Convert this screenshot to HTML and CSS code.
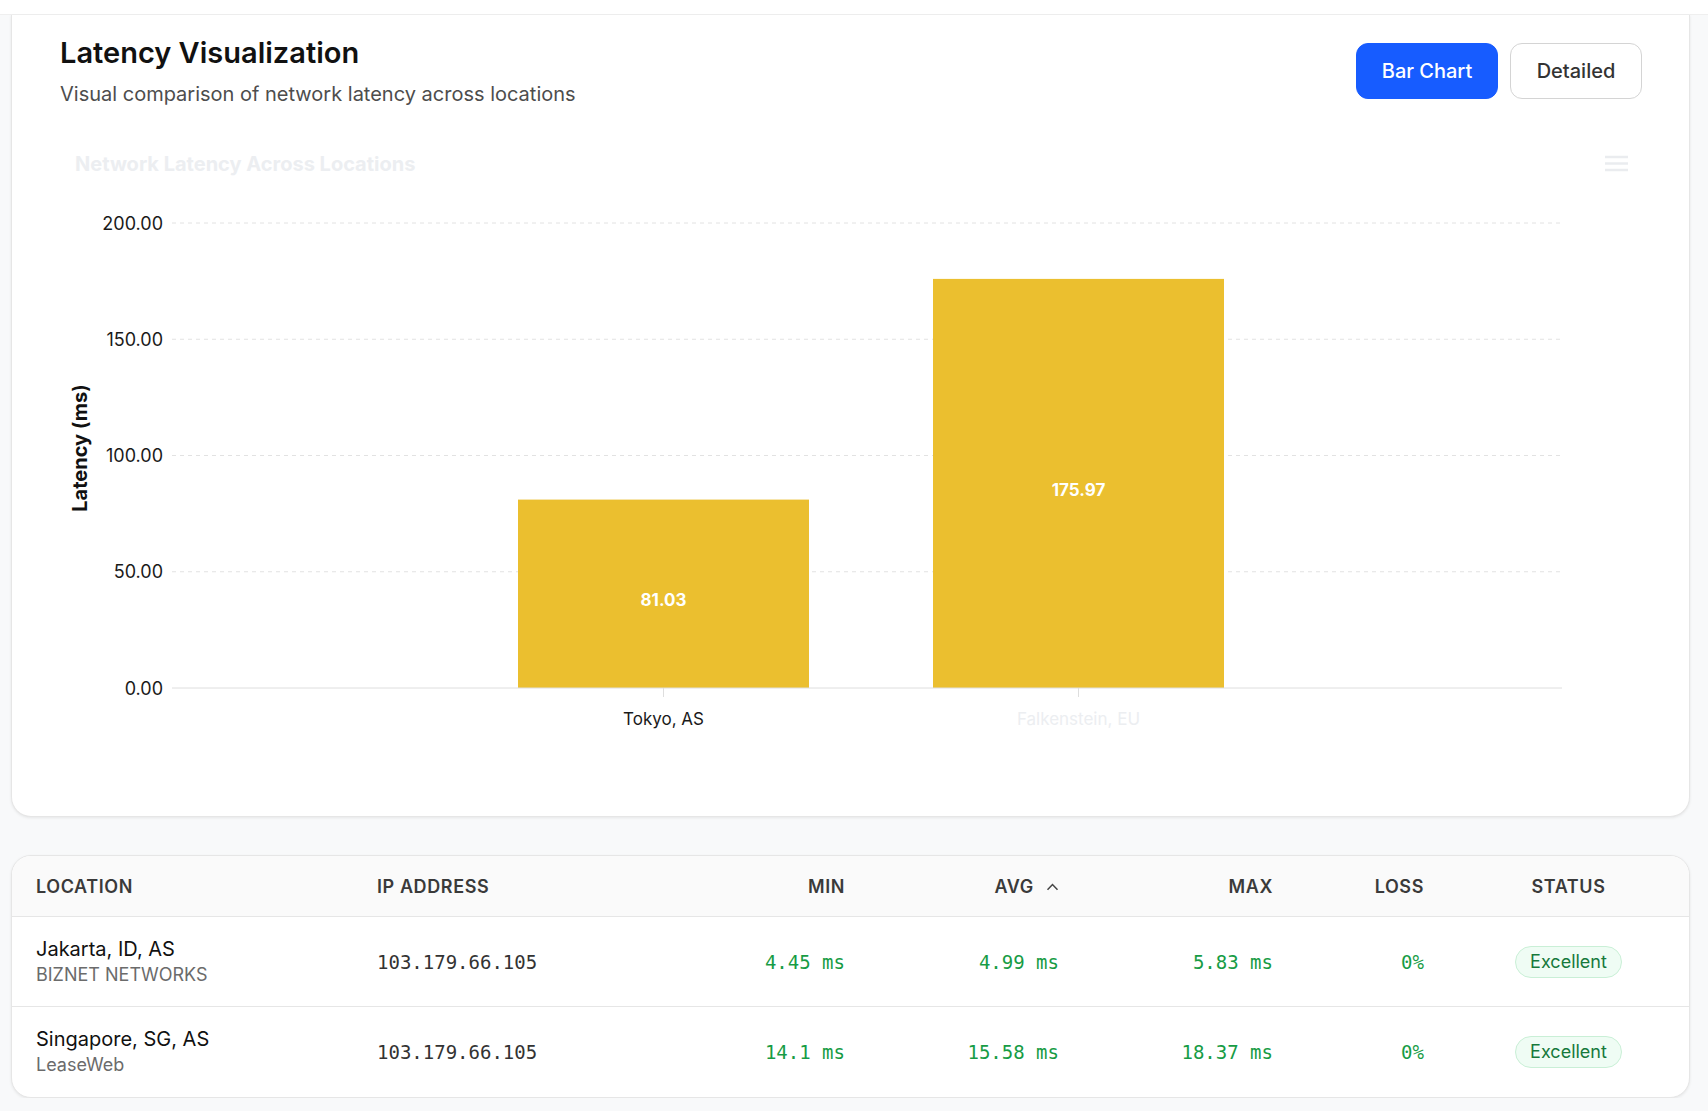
FILE: index.html
```html
<!DOCTYPE html>
<html lang="en">
<head>
    <meta charset="UTF-8">
    <title>Latency Visualization</title>
    <link rel="stylesheet" href="styles.css">
</head>

<body>

<div class="topbar"></div>

<div class="page">

    <!-- Chart card -->
    <div class="card chart-card">
        <div class="card-head">
            <div>
                <h2 class="title">Latency Visualization</h2>
                <p class="subtitle">Visual comparison of network latency across locations</p>
            </div>
            <div class="toggle">
                <button class="btn btn-active">Bar Chart</button>
                <button class="btn">Detailed</button>
            </div>
        </div>

        <svg class="chart" width="1677" height="690" viewBox="12 120 1677 690">
            <text class="chart-title" x="75" y="171">Network Latency Across Locations</text>

            <!-- menu -->
            <g class="menu">
                <line x1="1605" y1="157" x2="1628" y2="157"/>
                <line x1="1605" y1="163.5" x2="1628" y2="163.5"/>
                <line x1="1605" y1="170" x2="1628" y2="170"/>
            </g>

            <!-- grid -->
            <g class="grid">
                <line x1="172" y1="223" x2="1562" y2="223"/>
                <line x1="172" y1="339.25" x2="1562" y2="339.25"/>
                <line x1="172" y1="455.5" x2="1562" y2="455.5"/>
                <line x1="172" y1="571.75" x2="1562" y2="571.75"/>
            </g>

            <g class="y-labels">
                <text x="163" y="229.5">200.00</text>
                <text x="163" y="345.5">150.00</text>
                <text x="163" y="462">100.00</text>
                <text x="163" y="578">50.00</text>
                <text x="163" y="694.5">0.00</text>
            </g>

            <text class="y-title" x="87" y="448" transform="rotate(-90 87 448)">Latency (ms)</text>

            <!-- bars -->
            <rect class="bar" x="518" y="499.6" width="291" height="188.4"/>
            <rect class="bar" x="933" y="278.9" width="291" height="409.1"/>

            <text class="bar-label" x="663.5" y="605.5">81.03</text>
            <text class="bar-label" x="1078.5" y="495.5">175.97</text>

            <!-- x axis -->
            <line class="axis" x1="172" y1="688" x2="1562" y2="688"/>
            <line class="axis" x1="663.5" y1="688" x2="663.5" y2="697"/>
            <line class="axis" x1="1078.5" y1="688" x2="1078.5" y2="697"/>

            <text class="x-label" x="663.5" y="724.5">Tokyo, AS</text>
            <text class="x-label x-faded" x="1078.5" y="724.5">Falkenstein, EU</text>
        </svg>
    </div>

    <!-- Results table -->
    <div class="card table-card">
        <table class="results">
            <colgroup>
                <col style="width:341px">
                <col style="width:247px">
                <col style="width:269px">
                <col style="width:214px">
                <col style="width:214px">
                <col style="width:151px">
                <col style="width:241px">
            </colgroup>
            <thead>
                <tr>
                    <th>Location</th>
                    <th>IP Address</th>
                    <th class="num">Min</th>
                    <th class="num">Avg
                        <svg class="caret" width="13" height="8" viewBox="0 0 13 8"><path d="M1.5 6.8L6.5 1.5L11.5 6.8"/></svg>
                    </th>
                    <th class="num">Max</th>
                    <th class="num">Loss</th>
                    <th class="center">Status</th>
                </tr>
            </thead>
            <tbody>
                <tr>
                    <td>
                        <div class="loc-name">Jakarta, ID, AS</div>
                        <div class="loc-isp">BIZNET NETWORKS</div>
                    </td>
                    <td class="mono ip">103.179.66.105</td>
                    <td class="mono num good">4.45 ms</td>
                    <td class="mono num good">4.99 ms</td>
                    <td class="mono num good">5.83 ms</td>
                    <td class="mono num good">0%</td>
                    <td class="center"><span class="badge">Excellent</span></td>
                </tr>
                <tr>
                    <td>
                        <div class="loc-name">Singapore, SG, AS</div>
                        <div class="loc-isp">LeaseWeb</div>
                    </td>
                    <td class="mono ip">103.179.66.105</td>
                    <td class="mono num good">14.1 ms</td>
                    <td class="mono num good">15.58 ms</td>
                    <td class="mono num good">18.37 ms</td>
                    <td class="mono num good">0%</td>
                    <td class="center"><span class="badge">Excellent</span></td>
                </tr>
            </tbody>
        </table>
    </div>

</div>

</body>
</html>
```

FILE: styles.css
```css
body {
    font-family: Inter, "Noto Sans", sans-serif;
    background: #f8f9fa;
    color: #111;
    margin: 0;
    padding: 0;
}
.topbar {
    height: 15px;
    background: #fff;
    border-bottom: 1px solid #efefef;
    box-sizing: border-box;
}
.page {
    padding: 0 18px 0 11px;
}
.card {
    background: #fff;
    border: 1px solid #e6e6e6;
    border-radius: 20px;
    box-shadow: 0 1px 3px rgba(0, 0, 0, 0.08);
}
.chart-card {
    border-top: 0;
    border-radius: 0 0 20px 20px;
    padding-bottom: 6px;
}
.card-head {
    display: flex;
    justify-content: space-between;
    align-items: flex-start;
    height: 105px;
    box-sizing: border-box;
    padding: 20px 47px 0 48px;
}
.title {
    margin: 0;
    font-size: 29px;
    font-weight: 600;
    line-height: 35px;
    color: #111;
}
.subtitle {
    margin: 12px 0 0;
    font-size: 20px;
    line-height: 25px;
    color: #4d4d4d;
}
.toggle {
    display: flex;
    gap: 12px;
    margin-top: 8px;
}
.btn {
    height: 56px;
    width: 132px;
    border: 1px solid #d4d4d4;
    border-radius: 12px;
    background: #fff;
    color: #333;
    font-family: inherit;
    font-size: 20px;
    font-weight: 500;
    cursor: pointer;
}
.btn-active {
    width: 142px;
    background: #175cff;
    border-color: #175cff;
    color: #fff;
}
.chart {
    display: block;
    font-family: Inter, "Noto Sans", sans-serif;
}
.chart-title {
    font-size: 20px;
    font-weight: 700;
    fill: #eceef1;
}
.menu line {
    stroke: #eaecef;
    stroke-width: 2.5;
}
.grid line {
    stroke: #e2e2e2;
    stroke-dasharray: 4 4;
}
.y-labels text {
    text-anchor: end;
    font-size: 18px;
    fill: #1a1a1a;
}
.y-title {
    text-anchor: middle;
    font-size: 20px;
    font-weight: 700;
    fill: #111;
}
.bar {
    fill: #ebbf2f;
}
.bar-label {
    text-anchor: middle;
    font-size: 17px;
    font-weight: 700;
    fill: #fff;
}
.axis {
    stroke: #dedede;
}
.x-label {
    text-anchor: middle;
    font-size: 17px;
    fill: #1a1a1a;
}
.x-faded {
    fill: #eceef1;
}
.table-card {
    margin-top: 38px;
    overflow: hidden;
}
.results {
    width: 100%;
    table-layout: fixed;
    border-collapse: collapse;
}
.results th {
    height: 60px;
    padding: 0 24px;
    background: #fafafa;
    border-bottom: 1px solid #e6e6e6;
    text-align: left;
    text-transform: uppercase;
    font-size: 18px;
    font-weight: 600;
    letter-spacing: 0.6px;
    color: #3a3a3a;
}
.results td {
    height: 89px;
    padding: 0 24px;
    border-bottom: 1px solid #e6e6e6;
}
.results tbody tr:last-child td {
    border-bottom: 0;
    height: 90px;
}
.results .num {
    text-align: right;
}
.results .center {
    text-align: center;
}
.caret {
    margin-left: 7px;
    vertical-align: 2px;
}
.caret path {
    fill: none;
    stroke: #444;
    stroke-width: 1.5;
}
.loc-name {
    font-size: 20px;
    line-height: 26px;
    color: #111;
}
.loc-isp {
    font-size: 18px;
    line-height: 26px;
    color: #6b6b6b;
}
.mono {
    font-family: "DejaVu Sans Mono", monospace;
    font-size: 19px;
}
.ip {
    color: #333;
}
.good {
    color: #179c45;
}
.badge {
    display: inline-block;
    height: 32px;
    line-height: 30px;
    box-sizing: border-box;
    padding: 0 14px;
    border: 1px solid #c9efd6;
    border-radius: 999px;
    background: #effcf4;
    color: #16793c;
    font-size: 18px;
}
```
